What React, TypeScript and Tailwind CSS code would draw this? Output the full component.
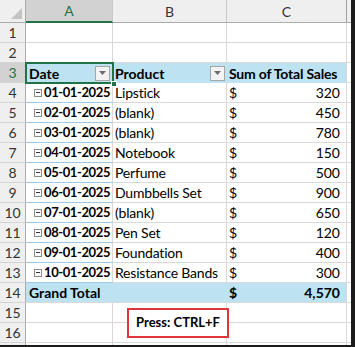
const rows = [
  { date: "01-01-2025", product: "Lipstick", sales: "320" },
  { date: "02-01-2025", product: "(blank)", sales: "450" },
  { date: "03-01-2025", product: "(blank)", sales: "780" },
  { date: "04-01-2025", product: "Notebook", sales: "150" },
  { date: "05-01-2025", product: "Perfume", sales: "500" },
  { date: "06-01-2025", product: "Dumbbells Set", sales: "900" },
  { date: "07-01-2025", product: "(blank)", sales: "650" },
  { date: "08-01-2025", product: "Pen Set", sales: "120" },
  { date: "09-01-2025", product: "Foundation", sales: "400" },
  { date: "10-01-2025", product: "Resistance Bands", sales: "300" },
];

function RowHead({ n, active }: { n: number; active?: boolean }) {
  return (
    <div
      className={`flex items-center justify-center border-r border-b border-r-[#ababab] border-b-[#d4d4d4] text-[14px] ${
        active ? "bg-[#d2d2d2] text-[#217346]" : "bg-[#efefef] text-[#333]"
      }`}
    >
      {n}
    </div>
  );
}

function FilterButton() {
  return (
    <span className="flex h-[15px] w-[15px] shrink-0 items-center justify-center border border-[#a6a6a6] bg-[#f3f3f3]">
      <svg width="7" height="4" viewBox="0 0 7 4">
        <path d="M0 0h7L3.5 4z" fill="#6b6b6b" />
      </svg>
    </span>
  );
}

function Collapse() {
  return (
    <span className="mr-[2px] flex h-[8px] w-[8px] shrink-0 items-center justify-center border border-[#8a8a8a] bg-white">
      <span className="h-px w-[4px] bg-[#333]" />
    </span>
  );
}

const cell = "border-r border-b border-[#d9d9d9]";

export default function App() {
  return (
    <div
      className="relative h-[347px] w-[355px] overflow-hidden border-r-4 border-b-2 border-[#1c1c1c] bg-white text-black"
      style={{ fontFamily: "Lato, 'Liberation Sans', sans-serif" }}
    >
      <div className="grid h-full grid-cols-[26px_87px_114px_120px_1fr] grid-rows-[23px_repeat(16,20px)_1fr]">
        {/* header row */}
        <div className="relative border-r border-b border-[#ababab] bg-[#efefef]">
          <svg className="absolute right-[3px] bottom-[3px]" width="11" height="11" viewBox="0 0 11 11">
            <path d="M11 0V11H0z" fill="#c4c4c4" />
          </svg>
        </div>
        <div className="flex items-center justify-center border-r border-[#c8c8c8] border-b-2 border-b-[#217346] bg-[#d2d2d2] text-[14px] text-[#217346]">
          A
        </div>
        <div className="flex items-center justify-center border-r border-b border-r-[#c8c8c8] border-b-[#ababab] bg-[#efefef] text-[14px] text-[#333]">
          B
        </div>
        <div className="flex items-center justify-center border-r border-b border-r-[#a0a0a0] border-b-[#ababab] bg-[#efefef] text-[14px] text-[#333]">
          C
        </div>
        <div className="border-b border-[#ababab] bg-[#efefef]" />

        {/* rows 1-2 */}
        {[1, 2].map((n) => (
          <div key={n} className="contents">
            <RowHead n={n} />
            <div className={cell} />
            <div className={cell} />
            <div className={cell} />
            <div className="border-b border-[#d9d9d9]" />
          </div>
        ))}

        {/* row 3 pivot header */}
        <RowHead n={3} active />
        <div className="relative flex items-center justify-between bg-[#bde3f3] pl-[3px] pr-[3px] text-[14px] font-bold">
          <span>Date</span>
          <FilterButton />
          <div className="pointer-events-none absolute -top-px -left-px -right-px -bottom-px border-2 border-[#217346]" />
          <div className="absolute -right-[4px] -bottom-[4px] h-[6px] w-[6px] border border-white bg-[#217346]" />
        </div>
        <div className="flex items-center justify-between bg-[#bde3f3] pl-[2px] pr-[2px] text-[14px] font-bold">
          <span>Product</span>
          <FilterButton />
        </div>
        <div className="flex items-center border-r border-[#d9d9d9] bg-[#bde3f3] pl-[2px] text-[14px] font-bold whitespace-nowrap tracking-[-0.2px]">
          Sum of Total Sales
        </div>
        <div className="border-b border-[#d9d9d9]" />

        {/* data rows */}
        {rows.map((r, i) => (
          <div key={r.date} className="contents">
            <RowHead n={i + 4} />
            <div className="flex items-center overflow-hidden whitespace-nowrap border-r border-b border-r-[#d9d9d9] border-b-[#9cc8e6] pl-[8px] text-[13px] font-bold tracking-[-0.4px]">
              <Collapse />
              {r.date}
            </div>
            <div className={`${cell} flex items-center whitespace-nowrap pl-[2px] text-[14px] tracking-[-0.2px]`}>{r.product}</div>
            <div className={`${cell} flex items-center justify-between pl-[2px] pr-[6px] text-[14px]`}>
              <span>$</span>
              <span>{r.sales}</span>
            </div>
            <div className="border-b border-[#d9d9d9]" />
          </div>
        ))}

        {/* grand total */}
        <RowHead n={14} />
        <div className="col-span-2 flex items-center border-b border-[#d9d9d9] bg-[#bde3f3] pl-[3px] text-[14px] font-bold">
          Grand Total
        </div>
        <div className="flex items-center justify-between border-r border-b border-[#d9d9d9] bg-[#bde3f3] pl-[2px] pr-[6px] text-[14px] font-bold">
          <span>$</span>
          <span>4,570</span>
        </div>
        <div className="border-b border-[#d9d9d9]" />

        {/* rows 15-16 */}
        {[15, 16].map((n) => (
          <div key={n} className="contents">
            <RowHead n={n} />
            <div className={cell} />
            <div className={cell} />
            <div className={cell} />
            <div className="border-b border-[#d9d9d9]" />
          </div>
        ))}

        <div className="border-r border-[#ababab] bg-[#efefef]" />
        <div className="border-r border-[#d9d9d9]" />
        <div className="border-r border-[#d9d9d9]" />
        <div className="border-r border-[#d9d9d9]" />
        <div />
      </div>

      <div className="absolute left-[127px] top-[308px] flex h-[30px] w-[102px] items-center justify-center border-2 border-[#e3343a] bg-white text-[13px] font-bold">
        Press: CTRL+F
      </div>
    </div>
  );
}
